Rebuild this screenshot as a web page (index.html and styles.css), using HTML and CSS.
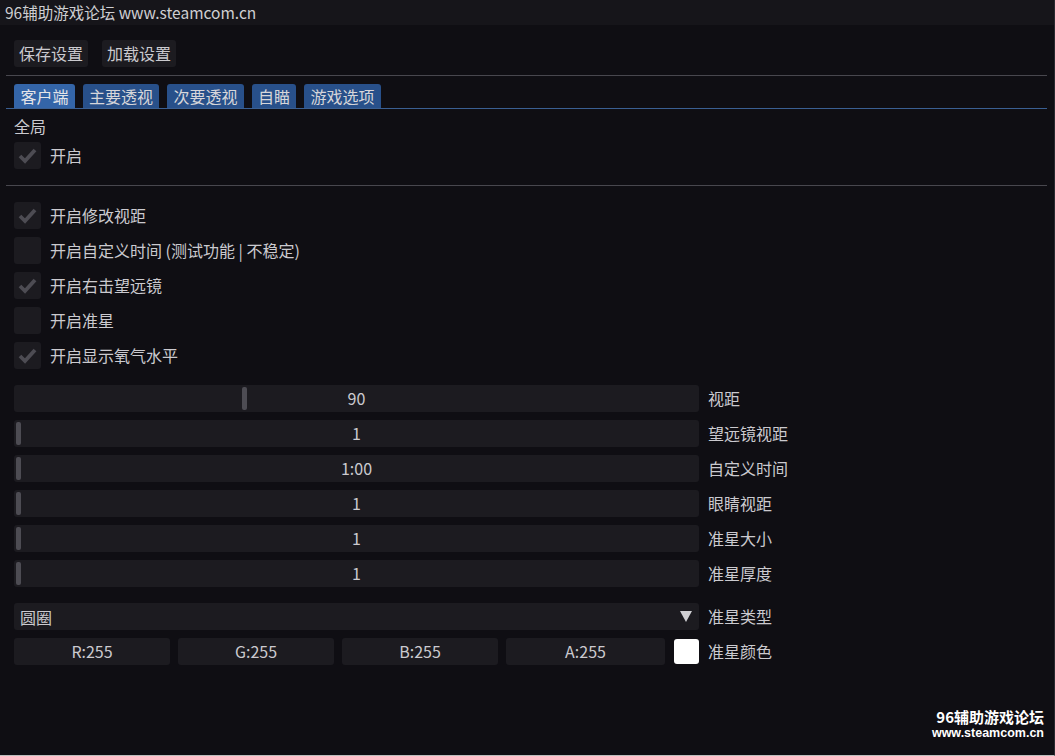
FILE: index.html
```html
<!DOCTYPE html>
<html lang="zh-CN">
<head>
<meta charset="utf-8">
<title>96辅助游戏论坛</title>
<link rel="stylesheet" href="styles.css">
</head>
<body>
<div class="window">
  <div class="titlebar">96辅助游戏论坛 www.steamcom.cn</div>
  <div class="content">
    <div class="btn-row">
      <div class="btn">保存设置</div>
      <div class="btn">加载设置</div>
    </div>
    <div class="sep sep-a"></div>
    <div class="tabs">
      <div class="tab active">客户端</div>
      <div class="tab">主要透视</div>
      <div class="tab">次要透视</div>
      <div class="tab">自瞄</div>
      <div class="tab">游戏选项</div>
    </div>
    <div class="section-title">全局</div>
    <div class="check-list first">
      <div class="check"><span class="box"><svg viewBox="0 0 27 27" class="tick"><path d="M6 14 L11 19 L21 8"/></svg></span><span class="label">开启</span></div>
    </div>
    <div class="sep sep-b"></div>
    <div class="check-list">
      <div class="check"><span class="box"><svg viewBox="0 0 27 27" class="tick"><path d="M6 14 L11 19 L21 8"/></svg></span><span class="label">开启修改视距</span></div>
      <div class="check"><span class="box"></span><span class="label">开启自定义时间 (测试功能 | 不稳定)</span></div>
      <div class="check"><span class="box"><svg viewBox="0 0 27 27" class="tick"><path d="M6 14 L11 19 L21 8"/></svg></span><span class="label">开启右击望远镜</span></div>
      <div class="check"><span class="box"></span><span class="label">开启准星</span></div>
      <div class="check"><span class="box"><svg viewBox="0 0 27 27" class="tick"><path d="M6 14 L11 19 L21 8"/></svg></span><span class="label">开启显示氧气水平</span></div>
    </div>
    <div class="sliders">
      <div class="row"><div class="slider"><span class="grab" style="left:228px"></span><span class="val">90</span></div><span class="rlabel">视距</span></div>
      <div class="row"><div class="slider"><span class="grab"></span><span class="val">1</span></div><span class="rlabel">望远镜视距</span></div>
      <div class="row"><div class="slider"><span class="grab"></span><span class="val">1:00</span></div><span class="rlabel">自定义时间</span></div>
      <div class="row"><div class="slider"><span class="grab"></span><span class="val">1</span></div><span class="rlabel">眼睛视距</span></div>
      <div class="row"><div class="slider"><span class="grab"></span><span class="val">1</span></div><span class="rlabel">准星大小</span></div>
      <div class="row"><div class="slider"><span class="grab"></span><span class="val">1</span></div><span class="rlabel">准星厚度</span></div>
    </div>
    <div class="row combo-row">
      <div class="combo"><span class="combo-text">圆圈</span><span class="arrow"></span></div>
      <span class="rlabel">准星类型</span>
    </div>
    <div class="row color-row">
      <div class="colors">
        <div class="cin c-r">R:255</div>
        <div class="cin c-g">G:255</div>
        <div class="cin c-b">B:255</div>
        <div class="cin c-a">A:255</div>
        <div class="swatch"></div>
      </div>
      <span class="rlabel">准星颜色</span>
    </div>
  </div>
  <div class="watermark">
    <div class="wm1">96辅助游戏论坛</div>
    <div class="wm2">www.steamcom.cn</div>
  </div>
</div>
</body>
</html>
```
FILE: styles.css
```css
* { box-sizing: border-box; }
html, body { margin: 0; padding: 0; }
body {
  background: #0f0e13;
  font-family: "Noto Sans CJK SC", "Noto Sans", sans-serif;
  font-size: 16px;
  color: #cbcacf;
  width: 1055px;
  height: 756px;
  overflow: hidden;
}
.window {
  position: relative;
  width: 1055px;
  height: 756px;
  background: #0f0e13;
  border-bottom: 1px solid #bdbdbd;
  border-right: 1px solid #2a2a30;
}
.titlebar {
  height: 25px;
  background: #16151a;
  padding-left: 5px;
  line-height: 25px;
  font-size: 15.5px;
  color: #cfcfd2;
  white-space: nowrap;
}
.content {
  padding: 15px 0 0 14px;
  display: flex;
  flex-direction: column;
}
.btn-row { display: flex; gap: 14px; height: 27px; }
.btn {
  height: 27px;
  padding: 0 5px;
  background: #1c1b20;
  border-radius: 3px;
  line-height: 27px;
}
.sep {
  height: 1px;
  background: #48474e;
  margin-left: -8px;
  margin-right: 7px;
}
.sep-a { margin-top: 8px; }
.tabs {
  margin-top: 8px;
  display: flex;
  gap: 8px;
  height: 25px;
  position: relative;
}
.tabs::after {
  content: "";
  position: absolute;
  left: -8px;
  right: 7px;
  bottom: 0;
  height: 1px;
  background: #3a5f92;
}
.tab {
  height: 25px;
  padding: 0 6px 0 6.5px;
  background: #28508a;
  border-radius: 3px 3px 0 0;
  line-height: 24px;
  color: #d6d6da;
}
.tab.active { background: #3465a8; color: #e4e4e8; }
.section-title {
  margin-top: 7px;
  height: 20px;
  line-height: 20px;
}
.check-list {
  display: flex;
  flex-direction: column;
  gap: 8px;
}
.check-list.first { margin-top: 6px; }
.check { display: flex; align-items: center; height: 27px; }
.box {
  width: 27px;
  height: 27px;
  background: #1c1b20;
  border-radius: 3px;
  display: flex;
  align-items: center;
  justify-content: center;
}
.tick { width: 27px; height: 27px; }
.tick path {
  fill: none;
  stroke: #4d4c53;
  stroke-width: 3.8;
  stroke-linecap: butt;
  stroke-linejoin: miter;
}
.label { margin-left: 9px; line-height: 27px; }
.sep-b { margin-top: 16px; margin-bottom: 16px; }
.sliders {
  margin-top: 16px;
  display: flex;
  flex-direction: column;
  gap: 8px;
}
.row { display: flex; align-items: center; height: 27px; }
.slider {
  position: relative;
  width: 685px;
  height: 27px;
  background: #1c1b20;
  border-radius: 3px;
  display: flex;
  align-items: center;
  justify-content: center;
}
.grab {
  position: absolute;
  left: 2px;
  top: 2px;
  width: 5px;
  height: 23px;
  background: #4d4c53;
  border-radius: 2px;
}
.val { line-height: 27px; }
.rlabel { margin-left: 9px; line-height: 27px; }
.combo-row { margin-top: 16px; }
.combo {
  width: 685px;
  height: 27px;
  background: #1c1b20;
  border-radius: 3px;
  display: flex;
  align-items: center;
  justify-content: space-between;
  padding: 0 7px 0 6px;
}
.arrow {
  width: 0;
  height: 0;
  border-left: 6px solid transparent;
  border-right: 6px solid transparent;
  border-top: 11px solid #cfcfd3;
}
.color-row { margin-top: 8px; }
.colors { display: flex; gap: 8px; width: 685px; align-items: center; }
.cin {
  height: 27px;
  background: #1c1b20;
  border-radius: 3px;
  line-height: 27px;
  text-align: center;
  width: 156px;
}
.c-a { width: 159px; }
.swatch {
  width: 25px;
  height: 25px;
  margin-left: 1px;
  background: #ffffff;
  border-radius: 3px;
}
.watermark {
  position: absolute;
  right: 10px;
  bottom: 14px;
  text-align: right;
  color: #ffffff;
  font-weight: 700;
}
.wm1 { font-size: 15px; line-height: 17px; font-family: "Noto Sans CJK SC", sans-serif; }
.wm2 { font-size: 12.5px; line-height: 16px; font-family: "Liberation Sans", sans-serif; }
```
